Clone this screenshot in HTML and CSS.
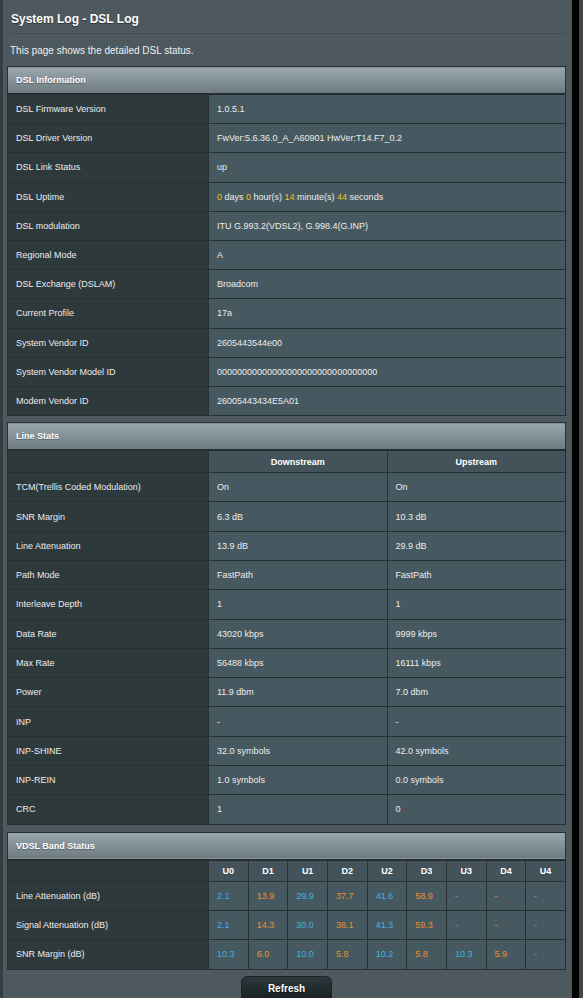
FILE: index.html
```html
<!DOCTYPE html>
<html lang="en">
<head>
<meta charset="utf-8">
<title>System Log - DSL Log</title>
<link rel="stylesheet" href="styles.css">
</head>
<body>
<div class="frame">
  <div class="edge"></div>
  <main class="panel">
    <h1 class="title">System Log - DSL Log</h1>
    <p class="desc">This page shows the detailed DSL status.</p>

    <table class="grid">
      <colgroup><col class="c-label"><col></colgroup>
      <thead><tr><th class="sect" colspan="2">DSL Information</th></tr></thead>
      <tbody>
        <tr><td class="lbl">DSL Firmware Version</td><td>1.0.5.1</td></tr>
        <tr><td class="lbl">DSL Driver Version</td><td>FwVer:5.6.36.0_A_A60901 HwVer:T14.F7_0.2</td></tr>
        <tr><td class="lbl">DSL Link Status</td><td>up</td></tr>
        <tr><td class="lbl">DSL Uptime</td><td><span class="y">0</span> days <span class="y">0</span> hour(s) <span class="y">14</span> minute(s) <span class="y">44</span> seconds</td></tr>
        <tr><td class="lbl">DSL modulation</td><td>ITU G.993.2(VDSL2), G.998.4(G.INP)</td></tr>
        <tr><td class="lbl">Regional Mode</td><td>A</td></tr>
        <tr><td class="lbl">DSL Exchange (DSLAM)</td><td>Broadcom</td></tr>
        <tr><td class="lbl">Current Profile</td><td>17a</td></tr>
        <tr><td class="lbl">System Vendor ID</td><td>2605443544e00</td></tr>
        <tr><td class="lbl">System Vendor Model ID</td><td>00000000000000000000000000000000</td></tr>
        <tr><td class="lbl">Modem Vendor ID</td><td>26005443434E5A01</td></tr>
      </tbody>
    </table>

    <table class="grid stats">
      <colgroup><col class="c-label"><col><col></colgroup>
      <thead>
        <tr><th class="sect" colspan="3">Line Stats</th></tr>
        <tr class="colhead"><th class="lbl"></th><th>Downstream</th><th>Upstream</th></tr>
      </thead>
      <tbody>
        <tr><td class="lbl">TCM(Trellis Coded Modulation)</td><td>On</td><td>On</td></tr>
        <tr><td class="lbl">SNR Margin</td><td>6.3 dB</td><td>10.3 dB</td></tr>
        <tr><td class="lbl">Line Attenuation</td><td>13.9 dB</td><td>29.9 dB</td></tr>
        <tr><td class="lbl">Path Mode</td><td>FastPath</td><td>FastPath</td></tr>
        <tr><td class="lbl">Interleave Depth</td><td>1</td><td>1</td></tr>
        <tr><td class="lbl">Data Rate</td><td>43020 kbps</td><td>9999 kbps</td></tr>
        <tr><td class="lbl">Max Rate</td><td>56488 kbps</td><td>16111 kbps</td></tr>
        <tr><td class="lbl">Power</td><td>11.9 dbm</td><td>7.0 dbm</td></tr>
        <tr><td class="lbl">INP</td><td>-</td><td>-</td></tr>
        <tr><td class="lbl">INP-SHINE</td><td>32.0 symbols</td><td>42.0 symbols</td></tr>
        <tr><td class="lbl">INP-REIN</td><td>1.0 symbols</td><td>0.0 symbols</td></tr>
        <tr><td class="lbl">CRC</td><td>1</td><td>0</td></tr>
      </tbody>
    </table>

    <table class="grid band">
      <colgroup><col class="c-label"><col><col><col><col><col><col><col><col><col></colgroup>
      <thead>
        <tr><th class="sect" colspan="10">VDSL Band Status</th></tr>
        <tr class="colhead"><th class="lbl"></th><th>U0</th><th>D1</th><th>U1</th><th>D2</th><th>U2</th><th>D3</th><th>U3</th><th>D4</th><th>U4</th></tr>
      </thead>
      <tbody>
        <tr><td class="lbl">Line Attenuation (dB)</td><td class="u">2.1</td><td class="d">13.9</td><td class="u">29.9</td><td class="d">37.7</td><td class="u">41.6</td><td class="d">58.9</td><td class="u">-</td><td class="d">-</td><td class="u">-</td></tr>
        <tr><td class="lbl">Signal Attenuation (dB)</td><td class="u">2.1</td><td class="d">14.3</td><td class="u">30.0</td><td class="d">38.1</td><td class="u">41.3</td><td class="d">59.3</td><td class="u">-</td><td class="d">-</td><td class="u">-</td></tr>
        <tr><td class="lbl">SNR Margin (dB)</td><td class="u">10.3</td><td class="d">6.0</td><td class="u">10.0</td><td class="d">5.8</td><td class="u">10.2</td><td class="d">5.8</td><td class="u">10.3</td><td class="d">5.9</td><td class="u">-</td></tr>
      </tbody>
    </table>

    <div class="actions"><button class="btn" type="button">Refresh</button></div>
  </main>
  <div class="gap"></div>
  <div class="rim"></div>
</div>
</body>
</html>
```

FILE: styles.css
```css
html, body {
  margin: 0;
  padding: 0;
  height: 100%;
}
body {
  background: #000;
  font-family: "Liberation Sans", Arial, Helvetica, sans-serif;
  color: #ececec;
}
.frame {
  display: flex;
  height: 998px;
  overflow: hidden;
}
.edge {
  width: 3px;
  background: #353d40;
}
.panel {
  width: 569px;
  box-sizing: border-box;
  background: #4d595e;
  padding: 0 6px 0 4px;
}
.gap {
  width: 7px;
  background: #000;
}
.rim {
  flex: 1;
  background: #3f474a;
}
.title {
  margin: 0 1px 0 3px;
  padding: 11px 0 6px 1px;
  font-size: 12px;
  line-height: 16px;
  font-weight: bold;
  color: #fff;
  text-shadow: 0 1px 1px rgba(0,0,0,0.45);
  border-bottom: 1px solid #414c50;
}
.desc {
  margin: 10px 0 8px 3px;
  font-size: 10px;
  line-height: 14px;
  color: #f0f0f0;
}
.grid {
  width: 100%;
  table-layout: fixed;
  border-collapse: collapse;
  border: 1px solid #252d30;
  margin-bottom: 6px;
  font-size: 9px;
}
.grid.stats {
  margin-bottom: 7px;
}
.grid .c-label {
  width: 201px;
}
.grid th, .grid td {
  border: 1px solid #273033;
  padding: 0 8px;
  text-align: left;
  font-weight: normal;
  background: #475960;
  white-space: nowrap;
  overflow: hidden;
}
.grid td {
  height: 28.2px;
}
.grid.stats td {
  height: 28.3px;
}
.grid .lbl {
  background: #2e393c;
}
.grid .sect {
  height: 26px;
  background: linear-gradient(#9aa7ac, #6d7b80);
  border-bottom: 2px solid #252d30;
  font-weight: bold;
  color: #fff;
  text-shadow: 0 1px 1px rgba(0,0,0,0.35);
}
.grid .colhead th {
  height: 21px;
  text-align: center;
  font-weight: bold;
  color: #fff;
  background: #435359;
}
.grid.band .colhead th {
  height: 20px;
}
.grid .colhead th.lbl {
  background: #2e393c;
}
.grid.band td {
  height: 28.3px;
}
.y { color: #f2bf16; }
.u { color: #3cb2e4; }
.d { color: #ec8f2a; }
.actions {
  display: flex;
  justify-content: center;
}
.btn {
  width: 91px;
  height: 32px;
  border: 1px solid #1b2326;
  border-radius: 6px;
  background: linear-gradient(#2d383c, #11181b);
  color: #fff;
  font-family: "Liberation Sans", Arial, sans-serif;
  font-weight: bold;
  font-size: 10px;
  padding: 0 0 6px;
  text-shadow: 0 1px 1px rgba(0,0,0,0.6);
}
```
